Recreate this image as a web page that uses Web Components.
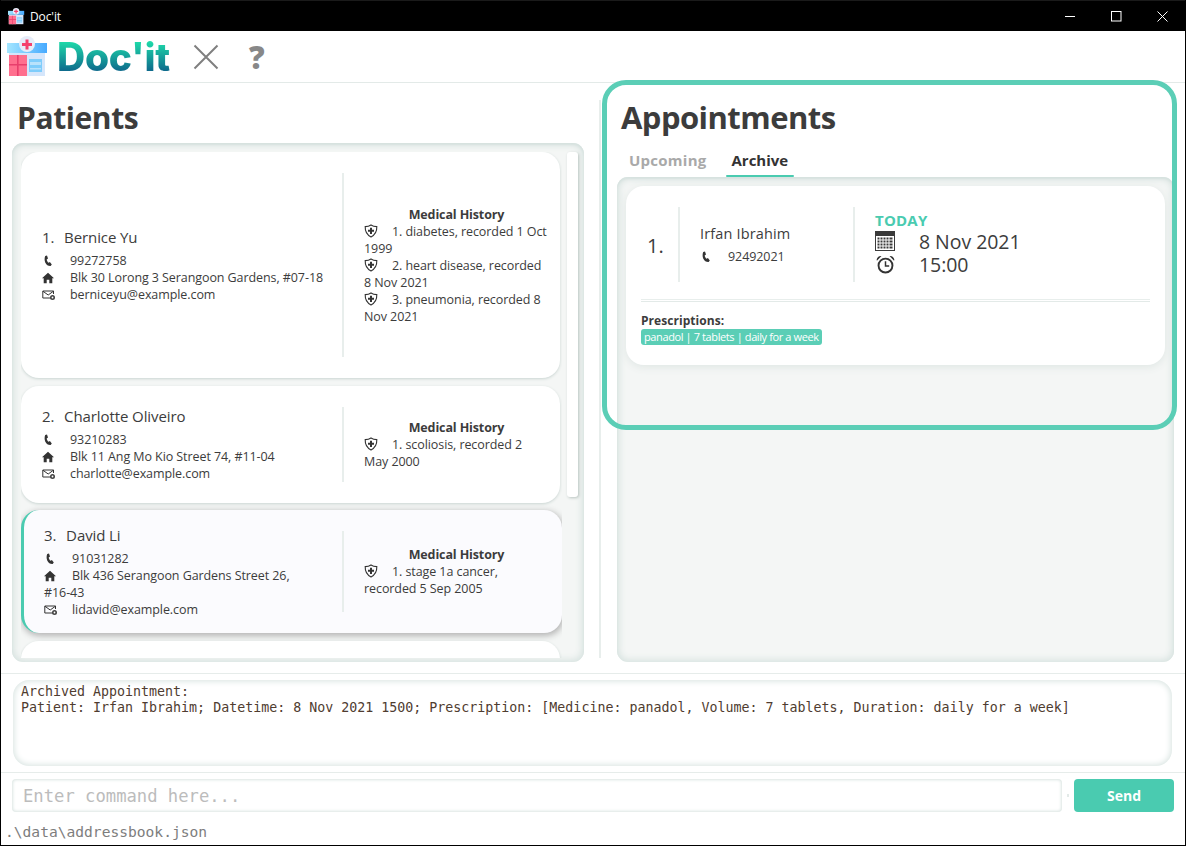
<!DOCTYPE html>
<html><head><meta charset="utf-8"><title>Doc'it</title>
<style>
html,body{margin:0;padding:0;background:#fff;overflow:hidden}
body{width:1186px;height:846px;font-family:"Open Sans","Noto Sans",sans-serif;color:#3c3c3c}
</style></head><body>
<doc-app>
  <doc-titlebar slot="title"></doc-titlebar>
  <doc-toolbar slot="toolbar"></doc-toolbar>
  <patient-panel slot="left">
    <patient-card index="1" name="Bernice Yu" phone="99272758" address="Blk 30 Lorong 3 Serangoon Gardens, #07-18" email="berniceyu@example.com" style="height:226px" history="1. diabetes, recorded 1 Oct 1999|2. heart disease, recorded 8 Nov 2021|3. pneumonia, recorded 8 Nov 2021"></patient-card>
    <patient-card index="2" name="Charlotte Oliveiro" phone="93210283" address="Blk 11 Ang Mo Kio Street 74, #11-04" email="charlotte@example.com" style="height:117px;--nudge:-2px" history="1. scoliosis, recorded 2 May 2000"></patient-card>
    <patient-card selected index="3" name="David Li" phone="91031282" address="Blk 436 Serangoon Gardens Street 26, #16-43" email="lidavid@example.com" style="height:123px;margin-top:-1px" history="1. stage 1a cancer, recorded 5 Sep 2005"></patient-card>
    <patient-card style="height:60px"></patient-card>
  </patient-panel>
  <appointment-panel slot="right">
    <appointment-card index="1" name="Irfan Ibrahim" phone="92492021" date="8 Nov 2021" time="15:00" rx="panadol | 7 tablets | daily for a week"></appointment-card>
  </appointment-panel>
  <result-box slot="result">Archived Appointment:
Patient: Irfan Ibrahim; Datetime: 8 Nov 2021 1500; Prescription: [Medicine: panadol, Volume: 7 tablets, Duration: daily for a week]</result-box>
  <command-box slot="command"></command-box>
  <status-bar slot="status">.\data\addressbook.json</status-bar>
</doc-app>
<script>
const ICON = {
  phone:`<svg viewBox="0 0 12 12" width="12" height="12"><path fill="#333" d="M3.2 1 5 .6l1 2.8-1.3 1c.2 1.400.8 2.500 1.900 3.300l1.300-.7L9.800 9.400 8.600 11C6.400 11.200 4.300 9.800 3.200 7.400 2.400 5.400 2.400 2.900 3.200 1z"/></svg>`,
  home:`<svg viewBox="0 0 12 12" width="12" height="12"><path fill="#333" d="M6 .8 12 6.200H10.300V11.200H7.300V7.800H4.700V11.200H1.700V6.200H0z"/></svg>`,
  mail:`<svg viewBox="0 0 14 12" width="14" height="12"><path fill="none" stroke="#333" stroke-width="1" d="M9 9H.8V2H11.500V5M1 2.300 6.200 6 11.300 2.300"/><circle cx="10.500" cy="8.500" r="2.500" fill="#444"/><circle cx="10.500" cy="8.500" r=".9" fill="#fff"/></svg>`,
  shield:`<svg viewBox="0 0 14 14" width="14" height="14"><path fill="none" stroke="#333" stroke-width="1.100" d="M7 1C5.200 2.200 3.200 2.600 1.200 2.600 1 7.500 3 11 7 13c4-2 6-5.500 5.800-10.400C10.800 2.600 8.800 2.200 7 1z"/><path fill="#333" d="M6 3.800h2v2h2v2H8v2.200H6V7.800H4v-2h2z"/></svg>`,
  calendar:`<svg viewBox="0 0 20 20" width="20" height="20"><rect width="20" height="20" fill="#3a3a3a"/><rect x="1" y="5" width="18" height="14" fill="#fff"/><path fill="#3a3a3a" d="M2.500 6.500h2v2h-2zM5.500 6.500h2v2h-2zM8.500 6.500h2v2h-2zM11.500 6.500h2v2h-2zM14.500 6.500h3v2h-3zM2.500 9.500h2v2h-2zM5.500 9.500h2v2h-2zM8.500 9.500h2v2h-2zM11.500 9.500h2v2h-2zM14.500 9.500h3v2h-3zM2.500 12.500h2v2h-2zM5.500 12.500h2v2h-2zM8.500 12.500h2v2h-2zM11.500 12.500h2v2h-2zM14.500 12.500h3v2h-3zM2.500 15.500h2v2h-2zM5.500 15.500h2v2h-2zM8.500 15.500h2v2h-2zM11.500 15.500h2v2h-2zM14.500 15.500h3v2h-3z"/></svg>`,
  clock:`<svg viewBox="0 0 18 18" width="19" height="19" style="margin-left:1px"><circle cx="9" cy="10" r="6.600" fill="none" stroke="#333" stroke-width="1.800"/><path fill="none" stroke="#333" stroke-width="1.400" d="M9 6v4.500h3.500"/><path fill="#333" d="M.6 4.500C1 2 3 .6 5.200 1L.9 5.500zM17.400 4.500C17 2 15 .6 12.800 1l4.300 4.500z"/></svg>`
};
const logo = (w,h,id) => `<svg viewBox="0 0 42 42" width="${w}" height="${h}" style="display:block">
<defs><linearGradient id="rf${id}" x1="0" y1="0" x2="1" y2="0"><stop offset="0" stop-color="#a4e6ff"/><stop offset="1" stop-color="#47aaff"/></linearGradient></defs>
<rect x="0" y="7" width="40" height="10" fill="url(#rf${id})"/>
<rect x="2" y="17" width="36" height="23" fill="#d5e6fb"/>
<rect x="2" y="19" width="18" height="21" fill="#ff6f8e"/>
<path d="M2 28h18v1.500H2zM10 19h1.600v21H10z" fill="#e83f6c"/>
<rect x="22" y="23" width="13" height="13" fill="#7fcdfb"/>
<path d="M23 26h11v3H23zM23 32h11v1.500H23z" fill="#b9e2fb"/>
<circle cx="20" cy="8" r="8" fill="#e6edf9"/>
<path d="M18.500 3.500h3V7H25v3h-3.500v3.500h-3V10H15V7h3.500z" fill="#f4416d"/></svg>`;

function def(name, css, html){
  customElements.define(name, class extends HTMLElement{
    constructor(){super();this.attachShadow({mode:"open"});}
    connectedCallback(){
      const a=n=>this.getAttribute(n)||"";
      this.shadowRoot.innerHTML=`<style>${css}</style>`+html(a,this);
    }
  });
}

def("doc-app",`
:host{display:flex;flex-direction:column;width:1186px;height:846px;box-sizing:border-box;border:solid #000;border-width:0 1px 1px 1px;position:relative;overflow:hidden;background:#fff}
.main{display:flex;height:590px;flex:none}
.mid{border-top:1px solid #e6ecea;flex:none}
.hl{position:absolute;left:601px;top:80px;width:575px;height:350px;box-sizing:border-box;border:5px solid #5bceb6;border-radius:24px;pointer-events:none}
`,()=>`<slot name="title"></slot><slot name="toolbar"></slot>
<div class="main"><slot name="left"></slot><slot name="right"></slot></div>
<div class="mid"><slot name="result"></slot></div>
<div class="mid"><slot name="command"></slot></div>
<slot name="status"></slot>
<div class="hl"></div>`);

def("doc-titlebar",`
:host{display:flex;align-items:center;height:31px;box-sizing:border-box;border-top:1px solid #1a1a1a;background:#000;color:#fff;font:12px "Open Sans",sans-serif;flex:none;padding-left:8px;padding-right:1px;margin-left:-1px;margin-right:-1px}
.t{margin-left:5px;letter-spacing:-.1px}
.c{margin-left:auto;display:flex}
.b{width:46px;height:30px;display:flex;align-items:center;justify-content:center}
.i{flex:none}
`,()=>`<span class="i">${logo(17,17,"t")}</span><span class="t">Doc'it</span>
<div class="c">
<div class="b"><svg width="11" height="11" viewBox="0 0 11 11"><path d="M0 5.500h10" stroke="#fff"/></svg></div>
<div class="b"><svg width="11" height="11" viewBox="0 0 11 11"><rect x=".5" y=".5" width="9.500" height="9.500" fill="none" stroke="#fff"/></svg></div>
<div class="b"><svg width="11" height="11" viewBox="0 0 11 11"><path d="M.5.500l10 10M10.500.500l-10 10" stroke="#fff" fill="none"/></svg></div>
</div>`);

def("doc-toolbar",`
:host{display:flex;align-items:center;height:52px;box-sizing:border-box;border-bottom:1px solid #e3eae8;flex:none;padding-left:6px;background:#fff}
.w{font:800 39px/50px Inter,"Open Sans",sans-serif;letter-spacing:-.25px;margin-left:8px;background:linear-gradient(180deg,#1ed9a9 20%,#0e6a8c 78%);-webkit-background-clip:text;background-clip:text;color:transparent;width:128px;white-space:nowrap}
.x{margin-left:8px;display:block}
.q{margin-left:30px;font:800 31px/50px "Open Sans",sans-serif;color:#888}
`,()=>`${logo(42,42,"m")}<span class="w">Doc'it</span>
<svg class="x" width="26" height="26" viewBox="0 0 26 26"><path d="M1.500 1.500l23 23M24.500 1.500l-23 23" stroke="#7f7f7f" stroke-width="2"/></svg>
<span class="q">?</span>`);

const panelCss=`background:#f4f6f5;border-radius:11px;box-shadow:inset 0 0 7px 2px #d6e2df,inset 0 2px 2px #d9e2e0;box-sizing:border-box;`;

def("patient-panel",`
:host{display:flex;flex-direction:column;width:600px;height:590px;box-sizing:border-box;padding-left:11px;border-right:2px solid transparent;position:relative;flex:none}
h1{margin:0;box-sizing:border-box;font:700 30px/60px "Open Sans",sans-serif;padding:5px 0 0 5px;height:60px;color:#3c3c3c;letter-spacing:-.4px}
.p{${panelCss}width:572px;height:519px;padding:9px 6px 4px 9px;display:flex;gap:5px}
.l{width:541px;height:506px;overflow:hidden;display:flex;flex-direction:column;gap:8px;flex:none}
.sb{width:11px;height:345px;background:#fff;border-radius:3px;box-shadow:1px 1px 3px #b9c4c1;flex:none}
.d{position:absolute;left:598px;top:17px;width:2px;height:558px;background:#e8eeec}
`,()=>`<h1>Patients</h1><div class="p"><div class="l"><slot></slot></div><div class="sb"></div></div><div class="d"></div>`);

def("patient-card",`
:host{display:flex;box-sizing:border-box;width:539px;flex:none;background:#fff;border-radius:18px;box-shadow:0 1px 3px #c9d4d1;padding:21px 0 21px 21px;font:12.5px/17px "Open Sans",sans-serif;color:#3c3c3c;letter-spacing:-.08px}
:host([selected]){width:541px;background:#fbfbfe;border-left:3px solid #4acbb0;padding-left:20px;box-shadow:1px 2px 6px 1px #b5b5b5}
.a{width:300px;flex:none;box-sizing:border-box;padding:0 13px 2px 0;align-self:center;margin-top:var(--nudge,0)}
:host([selected]) .a{width:298px}
.n{font-size:15px;line-height:24px;margin-bottom:3px;letter-spacing:-.1px}
.n span{margin-right:6px}
.r svg{vertical-align:-2px;margin-right:0}
.ic{display:inline-block;width:28px}
.nb{white-space:nowrap}
.b{width:0;border-left:2px solid #e8eeec;align-self:stretch;flex:none}
.h{width:185px;box-sizing:border-box;margin-left:20px;align-self:center;padding-right:0}
.h b{display:block;text-align:center;font-weight:700;letter-spacing:-.12px}
.h svg{vertical-align:-2px}
.h .ic{width:28px}
`,(a)=>{
 if(!a("name")) return "";
 const addr=a("address").replace(/#\S+/,m=>`<span class="nb">${m}</span>`);
 return `<div class="a"><div class="n"><span>${a("index")}.</span> ${a("name")}</div>
 <div class="r"><span class="ic">${ICON.phone}</span>${a("phone")}</div>
 <div class="r"><span class="ic">${ICON.home}</span>${addr}</div>
 <div class="r"><span class="ic">${ICON.mail}</span>${a("email")}</div></div>
 <div class="b"></div>
 <div class="h"><b>Medical History</b>${a("history").split("|").map(x=>`<div><span class="ic">${ICON.shield}</span>${x}</div>`).join("")}</div>`;
});

def("appointment-panel",`
:host{display:block;width:557px;flex:none;margin-left:16px;height:590px}
h1{margin:0;box-sizing:border-box;font:700 31px/60px "Open Sans",sans-serif;height:60px;padding:4px 0 0 4px;color:#3c3c3c;letter-spacing:-.55px}
.t{display:flex;height:34px;font:700 15px/34px "Open Sans",sans-serif;padding-left:12px;letter-spacing:.25px}
.t span{color:#a9a9a9;margin-right:25px}
.t .on{color:#333;position:relative;letter-spacing:0}
.t .on::after{content:"";position:absolute;left:-5px;right:-6px;bottom:0;height:2px;background:#4acbb0;border-radius:1px}
.p{${panelCss}height:485px;padding:9px}
`,()=>`<h1>Appointments</h1><div class="t"><span>Upcoming</span><span class="on">Archive</span></div><div class="p"><slot></slot></div>`);

def("appointment-card",`
:host{display:block;box-sizing:border-box;height:179px;background:#fff;border-radius:18px;box-shadow:0 2px 8px #dfe6e4;padding:21px 15px 0 15px;color:#3c3c3c;font-family:"Open Sans",sans-serif}
.top{display:flex;height:75px;align-items:stretch}
.num{width:37px;font-size:20px;line-height:77px;padding-left:6px;box-sizing:border-box}
.v{width:2px;background:#e8eeec;flex:none}
.who{width:173px;padding:1px 0 0 20px;box-sizing:border-box;font-size:14.5px;align-self:center;letter-spacing:.15px;line-height:22px}
.who .r{font-size:12.5px;line-height:22px;letter-spacing:-.08px;margin-top:1px}
.who .ic{display:inline-block;width:28px}
.who svg{vertical-align:-2px}
.when{padding:0 0 2px 20px;display:flex;flex-direction:column;justify-content:center}
.today{font:700 15px/16px "Open Sans",sans-serif;color:#4acbb0;letter-spacing:.2px;margin-bottom:2px}
.row{display:flex;align-items:center;font-size:19.500px;line-height:23px;letter-spacing:-.05px}
.row .ic{width:44px;display:flex;flex:none}
.rule{height:1px;border-top:1px solid #e8eeec;border-bottom:1px solid #e3eae8;margin-top:17px}
.pr{font:700 12px/14px "Open Sans",sans-serif;margin-top:12px;letter-spacing:.05px}
.tag{display:inline-block;background:#5bceb6;color:#fff;border-radius:3px;font:11px/16px "Open Sans",sans-serif;padding:0 3px;vertical-align:top;letter-spacing:-.39px;margin-top:1px}
`,(a)=>`<div class="top"><div class="num">${a("index")}.</div><div class="v"></div>
<div class="who"><div>${a("name")}</div><div class="r"><span class="ic">${ICON.phone}</span>${a("phone")}</div></div>
<div class="v"></div>
<div class="when"><div class="today">TODAY</div>
<div class="row"><span class="ic">${ICON.calendar}</span>${a("date")}</div>
<div class="row"><span class="ic">${ICON.clock}</span>${a("time")}</div></div></div>
<div class="rule"></div><div class="pr">Prescriptions:</div><span class="tag">${a("rx")}</span>`);

def("result-box",`
:host{display:block;height:98px;box-sizing:border-box;padding:6px 0 0 12px}
.b{width:1159px;height:86px;box-sizing:border-box;border-radius:16px;box-shadow:inset 0 0 6px 1px #d6e2df;padding:4px 8px;font:13.300px/16px "DejaVu Sans Mono",monospace;color:#4f3c30;white-space:pre-wrap}
`,()=>`<div class="b"><slot></slot></div>`);

def("command-box",`
:host{display:flex;align-items:center;height:46px;box-sizing:border-box;padding:6px 0 7px 11px}
.i{width:1050px;height:33px;box-sizing:border-box;border-radius:4px;box-shadow:inset 0 0 3px 1px #dbe5e2;padding-left:11px;font:17.200px/35px "DejaVu Sans Mono",monospace;color:#bcbcbc}
.dot{width:2px;height:3px;background:#e3eae8;margin:0 5px}
.s{width:100px;height:33px;border-radius:4px;background:#4acbb0;color:#fff;font:700 14px/33px "Open Sans",sans-serif;text-align:center}
`,()=>`<div class="i">Enter command here...</div><div class="dot"></div><div class="s">Send</div>`);

def("status-bar",`
:host{display:block;font:14.600px/26px "DejaVu Sans Mono",monospace;color:#7d7d7d;padding-left:4px;height:26px}
`,()=>`<slot></slot>`);
</script>
</body></html>
